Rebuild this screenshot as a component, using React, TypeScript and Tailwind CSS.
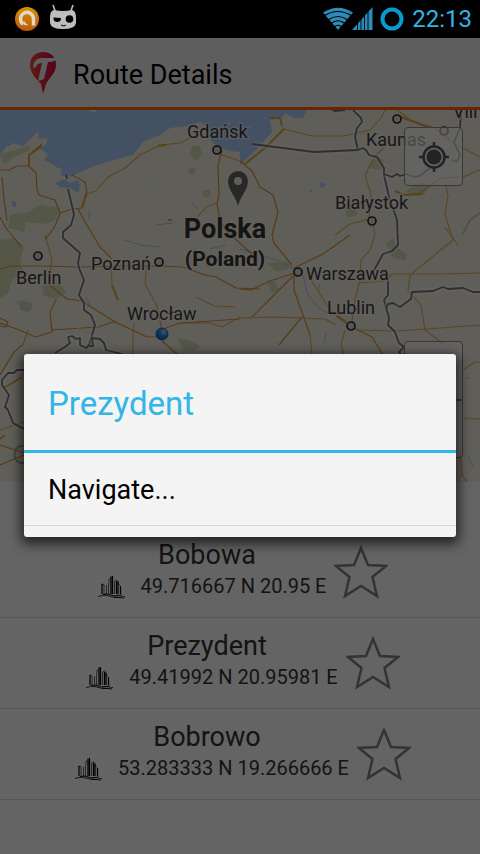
import React from "react";

type Place = { name: string; coords: string };

const places: Place[] = [
  { name: "Bobowa", coords: "49.716667 N 20.95 E" },
  { name: "Prezydent", coords: "49.41992 N 20.95981 E" },
  { name: "Bobrowo", coords: "53.283333 N 19.266666 E" },
];

const motorways = [
  "M0 170 L9 170 L17 166 L29 166 L36 173 L37 190 L39 195 L55 200 L60 213 L73 209 L82 208 L87 192 L85 182 L72 175",
  "M29 166 L29 155 L42 144",
  "M78 209 L85 222 L100 247 L111 258",
  "M60 213 L55 226 L45 240",
  "M2 177 L4 200 L7 221 M0 217 L6 228 L14 238 L22 247",
  "M0 269 L11 266 L42 266 L80 267 L118 266 L159 266 L183 267 L205 275 L216 277 L236 288 L260 289",
  "M48 284 L58 292 L67 299 L82 301 L115 322 L147 337 L160 337 L166 328 L180 323 L240 319",
  "M51 330 L98 327 L116 321",
  "M0 323 L14 328 L36 337 L52 332 L50 312 L56 300 M0 318 L8 322 L6 327 L0 326",
  "M162 341 L178 355",
  "M240 289 L251 290 L270 281 L298 272 M252 317 L270 299 L294 275",
  "M294 275 L294 290 L303 315 L310 335 M336 316 L350 326 L372 337 L383 355",
  "M222 151 L218 165 L219 195 L217 203 L220 222 L231 235 L253 255",
  "M240 161 L252 171 L260 187 L273 195 L278 212 L272 235 L274 243 L292 265",
  "M350 235 L323 254 L294 268 M302 317 L279 345",
  "M0 375 L14 352 L22 345",
  "M0 465 L24 455 M0 445 L24 453",
];
const roads = [
  "M82 208 L87 194 L96 191 L108 177 L125 168 L140 155 L160 145 L180 143 L190 138",
  "M216 153 L240 161 M217 203 L206 207 L195 220",
  "M111 258 L112 285 L118 301 M147 265 L145 284 L157 306 L162 332",
  "M133 355 L133 335 L134 323",
  "M196 297 L214 306 L235 307",
  "M22 347 L28 330 M45 235 L52 260 L48 284",
  "M373 223 L375 235 L370 250 L361 260 L360 280 L355 300 L352 322",
  "M284 129 L312 136 L344 136 L370 130 L381 118 L385 110",
  "M397 110 L412 121 L435 128 L452 142 L480 157",
  "M384 148 L375 156 L365 175 L371 195 L369 218",
  "M335 235 L350 224 L370 219",
  "M480 170 L463 177 L440 178 L421 193 L400 195",
  "M445 183 L448 195 L445 215 L453 240 L410 275 L408 291 L421 305 L425 330 L445 345",
  "M445 227 L458 245 M480 213 L470 220 L462 235",
  "M359 283 L385 281 L392 274 L440 274 L480 273",
  "M359 330 L397 331 L440 328 L480 325",
  "M240 318 L275 317 L300 318 L325 319 L336 325",
  "M310 278 L330 310 L347 322",
  "M310 335 L312 355 M345 330 L341 345 L344 355",
  "M180 323 L210 323 L222 327 L240 317",
  "M464 369 L475 362 L480 362",
  "M464 418 L480 419",
  "M460 450 L462 475 L467 482",
  "M0 430 L24 422",
];
const borders = [
  "M66 175 L67 179 M68 189 L73 210 L74 215 L71 225 L63 232 L63 238 L80 253 L78 263 L79 268 L84 280 L79 295 L84 303 L84 310 L91 315 L95 325 L89 345 L86 348 L80 345 L80 338 L76 339 L72 336 L68 337 L70 343 L65 347 L55 353",
  "M89 346 L93 346 L92 338 L100 339 L104 343 L106 350 L122 354",
  "M24 370 L17 370 L14 373 L8 373 L2 380 L2 385 L9 395 L5 407 L8 410 L13 423 L24 429",
  "M252 144 L314 152 L358 150 L355 137 L357 128 L362 122 L361 118 L353 110",
  "M358 150 L363 148 L366 150 L369 155 L377 157 L384 168 L384 175 L389 197 L397 220 L398 245 L392 251 L383 254 L373 272",
  "M388 278 L388 295 L384 300 L389 318 L388 325 L395 332 L399 343 L404 347 L399 352 L404 358",
  "M386 309 L388 304 L393 303 L400 307 L411 299 L412 292 L433 291 L443 287 L448 289 L463 288 L473 292 L480 292",
  "M384 174 L392 177 L397 174 L400 176 L406 174 L414 177 L420 176 L427 170 L434 166",
  "M461 110 L460 128 L454 142 L460 155 L457 162 L452 160",
  "M332 110 L335 111 L345 110",
];
const forests = [
  "M40 205 L60 208 L55 220 L45 224 L25 222 L28 212Z",
  "M0 240 L14 238 L24 248 L20 262 L24 272 L12 280 L8 294 L0 298Z",
  "M0 154 L15 150 L30 145 L30 150 L14 157 L4 165Z",
  "M10 215 L28 212 L24 232 L8 228Z",
  "M42 285 L60 283 L66 292 L56 300 L44 296Z",
  "M192 146 L200 146 L202 155 L196 161 L190 155Z",
  "M188 168 L196 168 L194 175 L189 173Z",
  "M203 190 L210 190 L210 197 L203 197Z",
  "M266 263 L290 261 L288 270 L276 271Z",
  "M266 280 L276 282 L279 290 L272 293Z",
  "M386 243 L394 238 L396 247 L407 254 L405 261 L392 257Z",
  "M375 155 L384 160 L380 170 L368 168Z",
  "M405 192 L418 182 L430 183 L424 195Z",
  "M178 338 L188 340 L200 346 L194 352 L183 350Z",
  "M345 210 L355 205 L358 215 L348 218Z",
  "M20 300 L33 303 L30 312 L20 310Z",
];
const rivers = [
  "M12 201 L16 206 M15 300 L28 312 M85 297 L92 308",
  "M155 225 L173 223 M210 249 L226 245",
  "M125 240 L140 245 L160 247",
  "M240 249 L258 254 L280 261 L297 271",
  "M303 275 L308 295 L318 307 L328 314",
  "M90 212 L88 219 M192 203 L197 209",
  "M320 284 L318 290 M326 333 L324 342",
  "M468 456 L473 467 M465 378 L469 378",
];
const lakes = "M319 182 L326 184 L323 188 L320 187Z M12 201 L16 202 L16 207 L13 207Z M151 184 L153 185 L152 187Z M310 189 L313 191 L310 193Z M90 208 L89 213 L88 212Z";

type City = { label: string; x: number; y: number; dotX: number; dotY: number };
const cities: City[] = [
  { label: "Gdańsk", x: 187, y: 138, dotX: 217, dotY: 150 },
  { label: "Kaunas", x: 366, y: 146, dotX: 397, dotY: 119 },
  { label: "Białystok", x: 335, y: 209, dotX: 372, dotY: 221 },
  { label: "Berlin", x: 16, y: 284, dotX: 38, dotY: 256 },
  { label: "Poznań", x: 91, y: 270, dotX: 159, dotY: 262 },
  { label: "Warszawa", x: 306, y: 280, dotX: 298, dotY: 272 },
  { label: "Lublin", x: 327, y: 314, dotX: 351, dotY: 326 },
  { label: "Wrocław", x: 127, y: 320, dotX: 162, dotY: 334 },
  { label: "Viln", x: 453, y: 118, dotX: 444, dotY: 131 },
];

function RouteMap() {
  return (
    <svg
      viewBox="0 110 480 372"
      preserveAspectRatio="xMidYMid slice"
      className="block h-full w-full font-[Roboto,sans-serif]"
      role="img"
      aria-label="Map of Poland"
    >
      <defs>
        <radialGradient id="location" cx="0.65" cy="0.3" r="0.8">
          <stop offset="0" stopColor="#8fd0ff" />
          <stop offset="0.5" stopColor="#2486e8" />
          <stop offset="1" stopColor="#0a4fb0" />
        </radialGradient>
      </defs>
      <rect y="110" width="480" height="372" fill="#efebde" />
      <path
        fill="#a7cbf8"
        d="M0 110 L0 155 L7 146 L23 146 L33 137 L38 132 L39 139 L48 138 L46 144 L40 148 L48 155 L44 160 L54 165 L52 170 L62 168 L60 175 L68 178 L80 172 L95 166 L110 161 L133 155 L143 142 L150 139 L160 135 L170 128 L187 126 L200 122 L210 127 L208 136 L213 143 L220 148 L230 151 L240 152 L240 165 L248 157 L258 148 L265 140 L272 132 L270 120 L283 117 L285 113 L294 118 L303 118 L307 110Z"
      />
      <path fill="#a7cbf8" d="M55 183 L64 179 L70 183 L78 180 L80 185 L78 193 L70 188 L60 187Z" />
      <path
        fill="#efebde"
        d="M88 110 L97 110 L95 113Z M33 136 L38 132 L37 141 L46 139 L44 146 L36 149 L29 153 L27 144Z M5 150 L13 143 L24 147 L12 154Z M50 163 L57 167 L62 174 L56 176Z"
      />
      {forests.map((d) => (
        <path key={d} d={d} fill="#d3dab2" />
      ))}
      <path d={lakes} fill="#a7cbf8" />
      {rivers.map((d) => (
        <path key={d} d={d} fill="none" stroke="#a9c3ea" strokeWidth="1" />
      ))}
      {roads.map((d) => (
        <path key={d} d={d} fill="none" stroke="#dfae55" strokeWidth="1.1" strokeLinejoin="round" />
      ))}
      {motorways.map((d) => (
        <path key={d} d={d} fill="none" stroke="#dc923e" strokeWidth="1.2" strokeLinejoin="round" />
      ))}
      <path
        fill="none"
        stroke="#dfa63c"
        strokeWidth="2"
        d="M270 118 L280 118 L282 126 M284 129 L265 148 L245 164 M82 208 L86 194 M29 166 L29 155 L42 146 M158 146 L166 145 M395 191 L404 195 L422 194 M112 285 L118 300 M401 117 L428 127 M168 220 L172 220 M4 388 L22 377 M0 439 L5 435"
      />
      {borders.map((d) => (
        <g key={d} fill="none" strokeLinejoin="round">
          <path d={d} stroke="#ffffff" strokeOpacity="0.35" strokeWidth="6" />
          <path d={d} stroke="#75757c" strokeWidth="1.8" />
        </g>
      ))}
      {cities.map((c) => (
        <g key={c.label}>
          <circle cx={c.dotX} cy={c.dotY} r="4" fill="#dcd8cf" stroke="#2c2c2c" strokeWidth="1.7" />
          <text
            x={c.x}
            y={c.y}
            fontSize="18"
            fill="#3a3a3a"
            stroke="#f6f3ea"
            strokeWidth="3"
            strokeOpacity="0.6"
            paintOrder="stroke"
          >
            {c.label}
          </text>
        </g>
      ))}
      <circle cx="162" cy="334" r="6" fill="url(#location)" stroke="#1763bd" />
      <g fontWeight="700" fill="#333333" stroke="#f6f3ea" strokeWidth="3" strokeOpacity="0.6" paintOrder="stroke" textAnchor="middle">
        <text x="225" y="238" fontSize="27">Polska</text>
        <text x="225" y="266" fontSize="21">(Poland)</text>
      </g>
      <path
        fill="#656565"
        fillRule="evenodd"
        d="M238 206 C236 197 228 190 228 181 A10 10 0 0 1 248 181 C248 190 240 197 238 206Z M238 177 A4 4 0 1 0 238 185 A4 4 0 1 0 238 177Z"
      />
      <path fill="none" stroke="#a8a8a0" strokeWidth="2" d="M32 446 H20 A8 9 0 0 0 20 463 H32" />
    </svg>
  );
}

function SkylineIcon() {
  return (
    <svg viewBox="0 0 30 30" className="size-[30px]" aria-hidden="true">
      <rect width="30" height="30" fill="#ffffff" fillOpacity="0.5" />
      <g fill="none" stroke="#000000">
        <path strokeWidth="1.2" d="M6 23 V13 M15 23 V5.500 M16.500 23 V5 M20.500 23 V10 M22 23 V11 M24.500 23 V15" />
        <path strokeWidth="0.6" d="M5.500 13 L8 13.500 V23 M10.500 23 V14 M12.500 23 V12 M13 12 V8 L14.500 8 M18.500 10 V23 M18.500 10 L20.500 9 L22 10 V13 L24 14" />
        <path strokeWidth="1" d="M7 23.500 L12 23 L18 25 L26 24" />
        <path strokeWidth="0.8" d="M2 25.500 Q8 23 13 25 T22 26.500 L29 25.500 M18 26 L28 27" />
      </g>
    </svg>
  );
}

function StatusBar() {
  return (
    <header className="flex h-[38px] items-center justify-between bg-black pl-[15px] pr-2">
      <div className="flex items-center gap-[11px]">
        <svg viewBox="0 0 24 24" className="size-6" aria-hidden="true">
          <defs>
            <linearGradient id="badge" x2="0" y2="1">
              <stop stopColor="#d89200" />
              <stop offset="1" stopColor="#c05808" />
            </linearGradient>
          </defs>
          <circle cx="12" cy="12" r="12" fill="url(#badge)" />
          <path d="M8 17 A6.500 6.500 0 1 1 18.500 12 V18.500" fill="none" stroke="#ddd8d0" strokeWidth="3.500" />
          <path d="M8 17 Q10 19 13 18 Q10 16 9 14Z" fill="#ddd8d0" />
        </svg>
        <svg viewBox="0 0 26 26" className="mb-1 size-[26px]" aria-hidden="true">
          <path d="M3 1 L5.500 8 M23 1 L20.500 8" stroke="#bdbdbd" strokeWidth="1.6" />
          <path d="M4 6 Q13 8 22 6 Q26 7 26 13 V19 Q25 25 13 25 Q1 25 0 19 V13 Q0 7 4 6Z" fill="#bdbdbd" />
          <path d="M3.500 13.500 L11 14 A3.700 4 0 0 1 3.500 14Z" fill="#000000" />
          <circle cx="19.500" cy="15" r="3.800" fill="#000000" />
          <path d="M11 21 L14 22 L16 21" fill="none" stroke="#000000" />
        </svg>
      </div>
      <div className="flex items-center">
        <svg viewBox="0 0 52 24" className="h-6 w-[52px]" aria-label="Wi-Fi and mobile signal" role="img">
          <path d="M16 23 L1 5.500 Q16 -4 31 5.500Z" fill="#2d8bb5" />
          <path
            d="M2 9 Q16 0 30 9 M6 13 Q16 6 26 13 M9 16.500 Q16 11 23 16.500 M12 20 Q16 16.500 20 20"
            fill="none"
            stroke="#000000"
            strokeWidth="1.200"
          />
          <path d="M30 23 L50.500 0 V23Z" fill="#2d8bb5" />
          <path d="M35.500 15 V24 M39 12 V24 M42.500 8 V24 M46 4 V24" stroke="#000000" strokeWidth="0.9" />
        </svg>
        <svg viewBox="0 0 24 24" className="ml-1.5 size-6" aria-label="Battery" role="img">
          <circle cx="12" cy="12" r="9.500" fill="none" stroke="#0a99d0" strokeWidth="4" />
        </svg>
        <time className="ml-2 text-2xl leading-none text-[#33b5e5]">22:13</time>
      </div>
    </header>
  );
}

export default function App() {
  return (
    <div className="flex min-h-screen flex-col bg-black font-[Roboto,sans-serif]">
      <StatusBar />
      <div className="relative flex flex-1 flex-col bg-[#fafafa]">
        <div className="flex h-[72px] items-center gap-4 border-b-3 border-[#ff6400] bg-[#ebebeb] pl-7">
          <svg viewBox="0 0 29 44" className="h-11 w-[29px]" aria-hidden="true">
            <defs>
              <linearGradient id="pin">
                <stop stopColor="#ed4a2e" />
                <stop offset="1" stopColor="#d20048" />
              </linearGradient>
            </defs>
            <path d="M15 43 L13 33 C7 27 2 21 2 14 C2 6 8 1 15 1 C23 1 28 6 28 14 C28 22 21 27 18 33 L15 43Z" fill="url(#pin)" />
            <path
              d="M5 17 Q5 8 13 7 L29 7 Q27 11 21 11 L20 11 L16 28 L10 30 L14 12 Q9 12 8 16Z"
              fill="#ebebeb"
            />
          </svg>
          <h1 className="pt-1 text-[27px] leading-8 text-black">Route Details</h1>
        </div>

        <section className="relative h-[372px]" aria-label="Route map">
          <RouteMap />
          <button
            type="button"
            aria-label="My location"
            className="absolute right-[17px] top-[17px] flex size-[59px] items-center justify-center rounded-sm border border-[#8c8c8c] bg-white/60"
          >
            <svg viewBox="0 0 30 30" className="size-[30px]" aria-hidden="true">
              <circle cx="15" cy="15" r="7.500" fill="#575757" />
              <circle cx="15" cy="15" r="10.500" fill="none" stroke="#575757" strokeWidth="2.500" />
              <path d="M15 0 V5 M15 25 V30 M0 15 H5 M25 15 H30" stroke="#575757" strokeWidth="2.500" />
            </svg>
          </button>
          <div className="absolute bottom-6 right-[17px] flex h-[117px] w-[59px] flex-col divide-y-2 divide-[#9a9a9a] rounded-sm border border-[#8c8c8c] bg-white/60">
            <button type="button" aria-label="Zoom in" className="flex-1" />
            <button type="button" aria-label="Zoom out" className="flex-1" />
          </div>
        </section>

        <ul className="pt-[45px]">
          {places.map((place) => (
            <li key={place.name} className="flex h-[91px] items-center justify-center gap-2 border-b border-[#d8d8d8] pr-1">
              <div className="flex flex-col items-center pb-1">
                <h2 className="text-[27px] leading-8 text-[#333333]">{place.name}</h2>
                <div className="flex items-center gap-[15px] pl-2">
                  <SkylineIcon />
                  <p className="text-xl leading-[30px] text-[#333333]">{place.coords}</p>
                </div>
              </div>
              <button type="button" aria-label={`Add ${place.name} to favourites`}>
                <svg viewBox="0 0 54 54" className="size-[54px]" aria-hidden="true">
                  <path
                    d="M27 3 L34 20 L52 21 L38.500 32 L43 51 L27 41 L11 51 L15.500 32 L2 21 L20 20Z"
                    fill="none"
                    stroke="#808080"
                    strokeWidth="2.500"
                  />
                </svg>
              </button>
            </li>
          ))}
        </ul>

        <div className="absolute inset-0 flex items-center justify-center bg-black/60 px-6 pb-0.5">
          <div
            role="dialog"
            aria-modal="true"
            aria-labelledby="dialog-title"
            className="w-full rounded-[3px] bg-[#f4f4f4] pb-[11px] shadow-[0_4px_12px_3px_rgba(0,0,0,0.65)]"
          >
            <h2
              id="dialog-title"
              className="flex h-[99px] items-center border-b-3 border-[#33b5e5] px-6 pt-1 text-[33px] leading-10 text-[#33b5e5]"
            >
              Prezydent
            </h2>
            <button
              type="button"
              className="flex h-[73px] w-full items-center border-b border-[#d5d5d5] px-6 pt-0.5 text-[27px] leading-8 text-black"
            >
              Navigate...
            </button>
          </div>
        </div>
      </div>
    </div>
  );
}
